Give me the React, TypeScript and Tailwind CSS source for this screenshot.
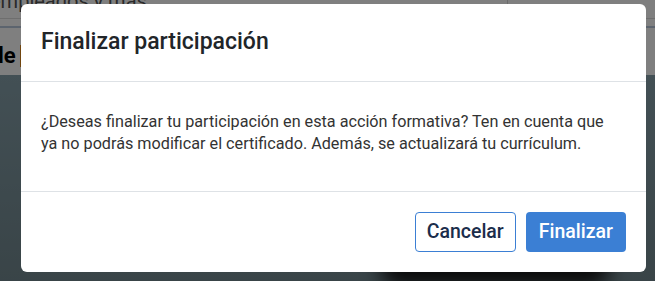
import React from 'react'

const App = () => {
  return (
    <div className="relative w-[655px] h-[281px] overflow-hidden font-['Roboto',sans-serif]">
      {/** page behind the modal */}
      <div className="flex flex-col h-full bg-white">
        <div className="flex h-[19px] border-b border-[#dcdcdc]">
          <div className="w-[508px] overflow-hidden border-r border-[#d6d6d6]">
            <div className="-mt-[11px] -ml-[10px] text-[20px] leading-[24px] text-[#555] whitespace-nowrap">empleados y más</div>
          </div>
          <div className="flex-1"></div>
        </div>
        <div className="h-[9px] border-b-2 border-[#b8c8dc]"></div>
        <div className="flex items-center h-[47px] pt-[8px]">
          <span className="-ml-[2px] text-[22px] font-bold text-black">le</span>
          <span className="ml-[4px] w-[5px] h-[22px] bg-[#e08a1e]"></span>
        </div>
        <div className="relative flex-1 bg-gradient-to-b from-[#86a0aa] to-[#738990]">
          <div className="absolute left-[380px] top-[172px] w-[230px] h-[40px] rounded-full bg-[#141414] blur-[10px]"></div>
        </div>
      </div>

      {/** overlay */}
      <div className="absolute inset-0 bg-black/50"></div>

      {/** modal */}
      <div className="absolute left-[21px] top-[4px] w-[625px] bg-white rounded-[6px]">
        <div className="flex items-center h-[78px] px-5 border-b border-[#dee2e6]">
          <h3 className="text-[23px] font-medium text-[#212529]">Finalizar participación</h3>
        </div>
        <div className="px-5 pt-[29px] pb-[36px] border-b border-[#dee2e6]">
          <p className="text-[16.2px] leading-[22px] text-[#333]">
            ¿Deseas finalizar tu participación en esta acción formativa? Ten en cuenta que
            <br />
            ya no podrás modificar el certificado. Además, se actualizará tu currículum.
          </p>
        </div>
        <div className="flex justify-end gap-[10px] px-5 py-5">
          <button className="h-10 px-[11px] rounded-[4px] border border-[#3b7fd4] bg-white text-[19.5px] font-medium text-[#1b2d4b]">Cancelar</button>
          <button className="h-10 px-[13px] rounded-[4px] bg-[#3b7fd4] text-[19.5px] font-medium text-white">Finalizar</button>
        </div>
      </div>
    </div>
  )
}

export default App
